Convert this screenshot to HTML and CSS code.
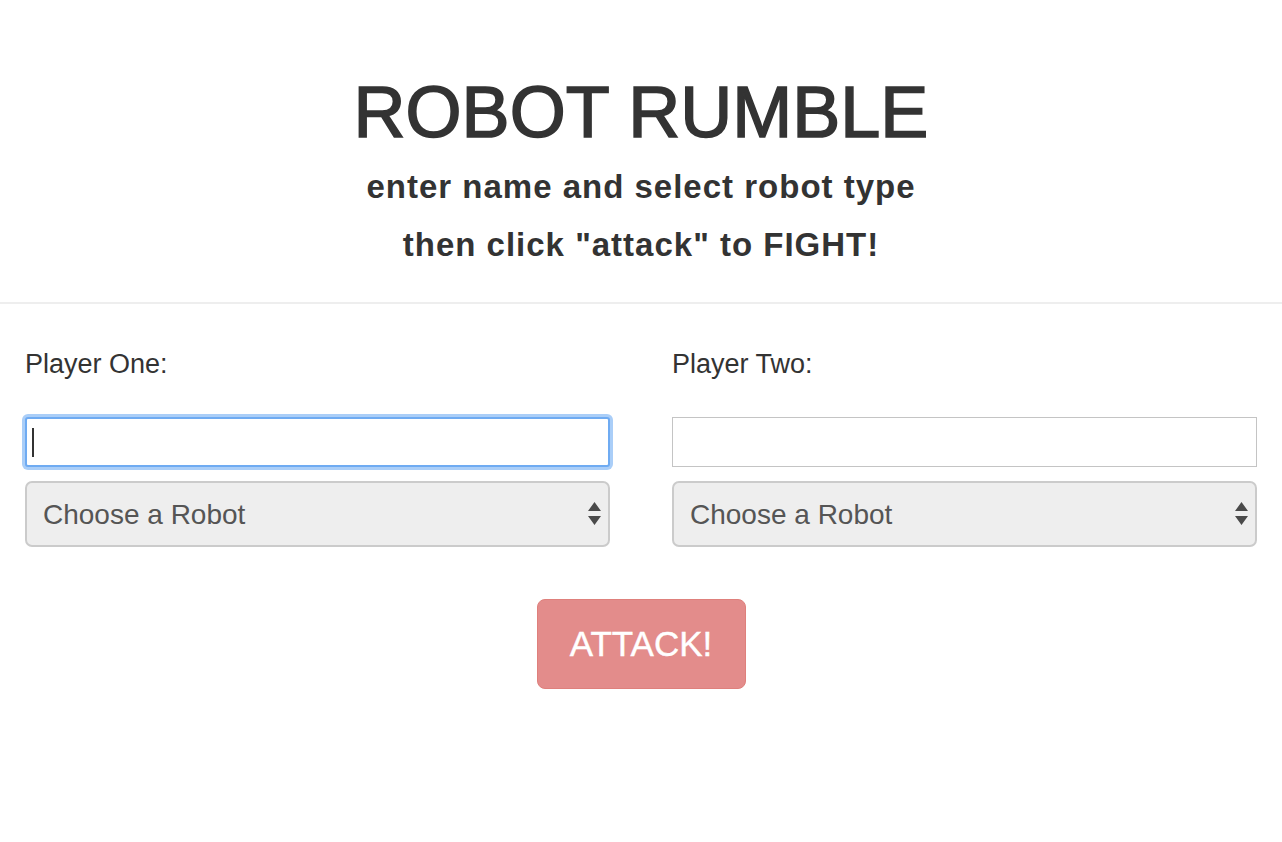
FILE: index.html
```html
<!DOCTYPE html>
<html lang="en">
<head>
<meta charset="utf-8">
<title>Robot Rumble</title>
<link rel="stylesheet" href="styles.css">
</head>
<body>
<header class="hero">
  <h1 class="title">ROBOT RUMBLE</h1>
  <h3 class="subtitle">enter name and select robot type</h3>
  <h3 class="subtitle">then click "attack" to FIGHT!</h3>
</header>
<hr class="divider">
<main class="arena">
  <section class="player">
    <label class="player-label" for="p1">Player One:</label>
    <div class="field">
      <input id="p1" class="name-input focused" type="text">
      <span class="caret"></span>
    </div>
    <div class="select-wrap">
      <select class="robot-select"><option>Choose a Robot</option></select>
      <svg class="arrows" width="13" height="24" viewBox="0 0 13 24"><path d="M6.5 0 L13 9 L0 9 Z M0 14 L13 14 L6.5 23 Z" fill="#4a4a4a"/></svg>
    </div>
  </section>
  <section class="player">
    <label class="player-label" for="p2">Player Two:</label>
    <div class="field">
      <input id="p2" class="name-input" type="text">
    </div>
    <div class="select-wrap">
      <select class="robot-select"><option>Choose a Robot</option></select>
      <svg class="arrows" width="13" height="24" viewBox="0 0 13 24"><path d="M6.5 0 L13 9 L0 9 Z M0 14 L13 14 L6.5 23 Z" fill="#4a4a4a"/></svg>
    </div>
  </section>
</main>
<div class="actions">
  <button class="attack-btn" type="button" disabled>ATTACK!</button>
</div>
</body>
</html>
```

FILE: styles.css
```css
html, body {
  margin: 0;
  padding: 0;
  background: #fff;
}
body {
  font-family: "Liberation Sans", Arial, sans-serif;
  color: #333;
}
.hero {
  text-align: center;
  padding-top: 76px;
}
.title {
  margin: 0;
  font-size: 72px;
  line-height: 72px;
  font-weight: normal;
  -webkit-text-stroke: 1.6px #333;
}
.subtitle {
  margin: 0;
  font-size: 33px;
  line-height: 58px;
  font-weight: bold;
  letter-spacing: 1px;
}
.subtitle:first-of-type {
  margin-top: 10px;
}
.divider {
  margin: 28px 0 0;
  border: 0;
  border-top: 2px solid #eee;
}
.arena {
  display: grid;
  grid-template-columns: 1fr 1fr;
  column-gap: 62px;
  padding: 0 25px;
  margin-top: 42px;
}
.player {
  display: flex;
  flex-direction: column;
}
.player-label {
  font-size: 27px;
  line-height: 36px;
  margin-bottom: 35px;
}
.field {
  position: relative;
}
.name-input {
  box-sizing: border-box;
  display: block;
  width: 100%;
  height: 50px;
  margin: 0;
  border: 1px solid #c4c4c4;
  border-radius: 0;
  background: #fff;
  outline: none;
  font-family: inherit;
  font-size: 24px;
}
.name-input.focused {
  border: 2px solid #6fabf2;
  box-shadow: 0 0 0 3px #aacef8;
  border-radius: 3px;
}
.caret {
  position: absolute;
  left: 7px;
  top: 11px;
  width: 2px;
  height: 29px;
  background: #333;
}
.select-wrap {
  position: relative;
  margin-top: 14px;
}
.robot-select {
  -webkit-appearance: none;
  appearance: none;
  box-sizing: border-box;
  display: block;
  width: 100%;
  height: 66px;
  margin: 0;
  padding: 0 40px 0 16px;
  border: 2px solid #cbcbcb;
  border-radius: 7px;
  background: #eeeeee;
  color: #555;
  font-family: inherit;
  font-size: 28px;
}
.arrows {
  position: absolute;
  right: 9px;
  top: 21px;
  pointer-events: none;
}
.actions {
  display: flex;
  justify-content: center;
  margin-top: 52px;
}
.attack-btn {
  width: 209px;
  height: 90px;
  border: 1px solid #df807c;
  border-radius: 8px;
  background: #e38c8b;
  color: #fff;
  font-family: inherit;
  font-size: 35px;
  padding: 0;
  opacity: 1;
  -webkit-text-stroke: 0.4px #fff;
}
```
